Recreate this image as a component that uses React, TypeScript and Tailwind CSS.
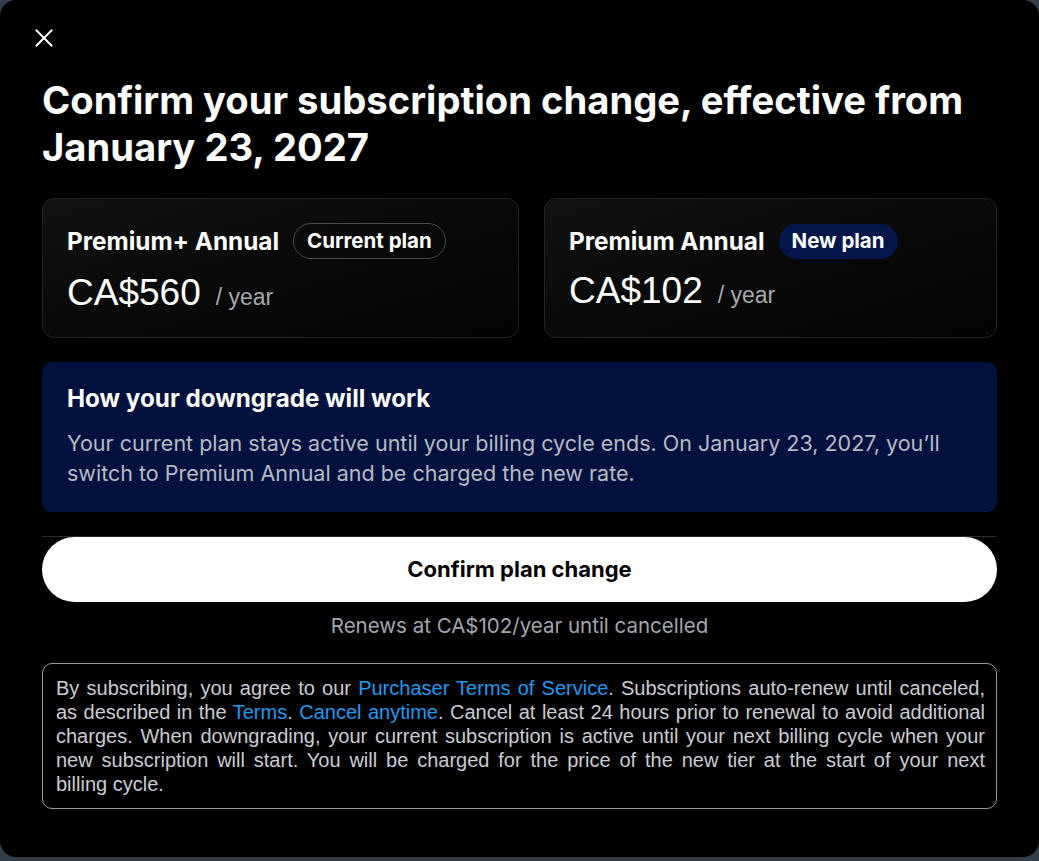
import React from "react";

const sans = { fontFamily: "Inter, 'Noto Sans', sans-serif" };
const arial = { fontFamily: "'Liberation Sans', Arial, sans-serif" };

function CloseIcon() {
  return (
    <svg width="20" height="20" viewBox="0 0 20 20" fill="none" stroke="white" strokeWidth="2" strokeLinecap="square">
      <path d="M2.5 2.5 L17.5 17.5 M17.5 2.5 L2.5 17.5" />
    </svg>
  );
}

function Link({ children }: { children: React.ReactNode }) {
  return <span className="text-[#1d9bf0]">{children}</span>;
}

function PlanCard({
  name,
  badge,
  badgeKind,
  price,
  widthClass,
  priceOffset,
}: {
  name: string;
  badge: string;
  badgeKind: "outline" | "filled";
  price: string;
  widthClass: string;
  priceOffset: string;
}) {
  return (
    <div
      className={`${widthClass} h-[140px] rounded-[12px] border border-[#232323] bg-gradient-to-br from-[#121212] to-[#030303] px-[24px] pt-[24px]`}
    >
      <div className="flex items-center gap-[14px]">
        <span className="text-[24.3px] font-bold text-white" style={sans}>
          {name}
        </span>
        {badgeKind === "outline" ? (
          <span
            className="flex h-[36px] items-center rounded-full border border-[#4a4a4a] px-[13px] text-[20.5px] font-bold text-white"
            style={sans}
          >
            {badge}
          </span>
        ) : (
          <span
            className="flex h-[35px] items-center rounded-full bg-[#04164a] px-[13px] text-[20.5px] font-bold text-white"
            style={sans}
          >
            {badge}
          </span>
        )}
      </div>
      <div className={`flex items-baseline gap-[15px] ${priceOffset}`}>
        <span className="text-[37px] leading-none text-white" style={arial}>
          {price}
        </span>
        <span className="text-[23px] text-[#a7a9ad]" style={arial}>
          / year
        </span>
      </div>
    </div>
  );
}

export default function App() {
  return (
    <div className="min-h-[861px] w-full bg-[#343e49]">
      <div className="h-[857px] w-full rounded-[16px] bg-black px-[42px] pt-[27px]" style={sans}>
        <button className="ml-[-9px] flex h-[22px] w-[22px] items-center justify-center">
          <CloseIcon />
        </button>

        <h1 className="mt-[28px] text-[38.2px] font-bold leading-[47px] text-white" style={sans}>
          Confirm your subscription change, effective from January 23, 2027
        </h1>

        <div className="mt-[27px] flex gap-[25px]">
          <PlanCard
            name="Premium+ Annual"
            badge="Current plan"
            badgeKind="outline"
            price="CA$560"
            widthClass="w-[477px]"
            priceOffset="mt-[15px]"
          />
          <PlanCard
            name="Premium Annual"
            badge="New plan"
            badgeKind="filled"
            price="CA$102"
            widthClass="flex-1"
            priceOffset="mt-[13px]"
          />
        </div>

        <div className="mt-[24px] h-[150px] rounded-[10px] bg-[#02113d] px-[25px] pt-[21px]">
          <div className="text-[24.2px] font-bold leading-[32px] text-white" style={sans}>
            How your downgrade will work
          </div>
          <p className="mt-[13px] text-[21.5px] leading-[30px] text-[#b6bac3]" style={sans}>
            Your current plan stays active until your billing cycle ends. On January 23, 2027, you’ll switch to
            Premium Annual and be charged the new rate.
          </p>
        </div>

        <div className="mt-[24px] border-t border-[#2a2a2a]">
          <button
            className="flex h-[65px] w-full items-center justify-center rounded-full bg-white text-[22px] font-bold text-black"
            style={sans}
          >
            Confirm plan change
          </button>
        </div>

        <p className="mt-[11px] text-center text-[20.5px] leading-[26px] text-[#a3a7ad]" style={sans}>
          Renews at CA$102/year until cancelled
        </p>

        <div className="mt-[24px] rounded-[10px] border border-[#9a9a9a] pb-[12px] pl-[13px] pr-[11px] pt-[12px]">
          <div className="text-justify text-[20px] leading-[24px] text-[#c9ccd1]" style={arial}>
            <div className="[text-align-last:justify]">
              By subscribing, you agree to our <Link>Purchaser Terms of Service</Link>. Subscriptions auto-renew until
              canceled,
            </div>
            <div className="[text-align-last:justify]">
              as described in the <Link>Terms</Link>. <Link>Cancel anytime</Link>. Cancel at least 24 hours prior to
              renewal to avoid additional
            </div>
            <div className="[text-align-last:justify]">
              charges. When downgrading, your current subscription is active until your next billing cycle when your
            </div>
            <div className="[text-align-last:justify]">
              new subscription will start. You will be charged for the price of the new tier at the start of your next
            </div>
            <div>billing cycle.</div>
          </div>
        </div>
      </div>
    </div>
  );
}
